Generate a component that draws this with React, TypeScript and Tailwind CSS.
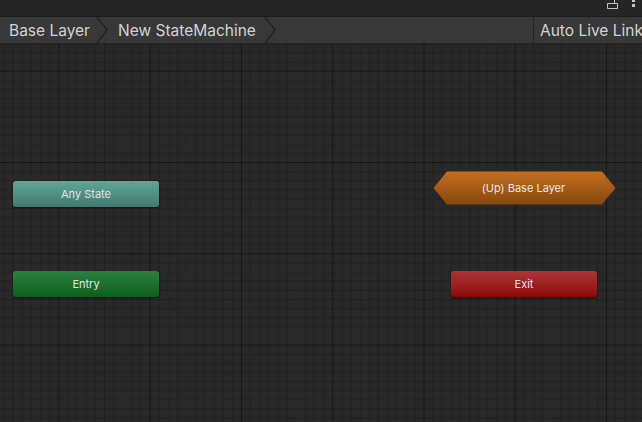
import React from 'react';

const MINOR = 9.13;
const MAJOR = 91.3;

function GridBackground() {
  const minors = Array.from({ length: 10 }, (_, i) => i * MINOR);
  return (
    <svg className="absolute inset-0 w-full h-full" xmlns="http://www.w3.org/2000/svg">
      <defs>
        <pattern id="grid" x="58.3" y="26.7" width={MAJOR} height={MAJOR} patternUnits="userSpaceOnUse">
          <rect width={MAJOR} height={MAJOR} fill="#292929" />
          {minors.map((p) => (
            <g key={p}>
              <line x1={p + 0.5} y1="0" x2={p + 0.5} y2={MAJOR} stroke="#212121" strokeWidth="1" />
              <line x1="0" y1={p + 0.5} x2={MAJOR} y2={p + 0.5} stroke="#212121" strokeWidth="1" />
            </g>
          ))}
          <line x1="0.5" y1="0" x2="0.5" y2={MAJOR} stroke="#171717" strokeWidth="1" />
          <line x1="0" y1="0.5" x2={MAJOR} y2="0.5" stroke="#171717" strokeWidth="1" />
        </pattern>
      </defs>
      <rect width="100%" height="100%" fill="url(#grid)" />
    </svg>
  );
}

function Chevron() {
  return (
    <svg width="14" height="26" viewBox="0 0 14 26" className="shrink-0">
      <path d="M1 0 L11 13 L1 26" fill="none" stroke="#222" strokeWidth="1.5" />
    </svg>
  );
}

function StateNode({ label, className }: { label: string; className: string }) {
  return (
    <div
      className={`absolute h-[26px] w-[146px] rounded-[3px] flex items-center justify-center text-[11px] text-[#e4e4e4] shadow-[0_1px_2px_rgba(0,0,0,0.6)] ${className}`}
    >
      {label}
    </div>
  );
}

export default function App() {
  return (
    <div className="w-[642px] h-[422px] bg-[#282828] flex flex-col overflow-hidden" style={{ fontFamily: 'Inter, "Noto Sans", sans-serif' }}>
      {/* title strip */}
      <div className="h-[17px] bg-[#262626] border-b border-[#1d1d1d] flex justify-end items-start gap-[14px] pr-[7px] shrink-0">
        <svg width="11" height="9" viewBox="0 0 11 9">
          <path d="M0.5 3.5 H10.5 V8.5 H0.5 Z M7.5 3.5 V0" fill="none" stroke="#c4c4c4" strokeWidth="1" />
        </svg>
        <svg width="3" height="10" viewBox="0 0 3 10">
          <rect x="0" y="0" width="3" height="2" fill="#c4c4c4" />
          <rect x="0" y="4" width="3" height="3" fill="#c4c4c4" />
        </svg>
      </div>

      {/* breadcrumb bar */}
      <div className="h-[27px] bg-[#383838] border-b border-[#232323] flex items-stretch shrink-0 text-[15.5px] text-[#d2d2d2]">
        <div className="flex items-center pl-[9px] pr-[6px] pt-[1px]">Base Layer</div>
        <Chevron />
        <div className="flex items-center pl-[8px] pr-[8px] pt-[1px]">New StateMachine</div>
        <Chevron />
        <div className="flex-1" />
        <div className="flex items-center border-l border-[#252525] pl-[6px] pt-[1px] whitespace-nowrap w-[109px] overflow-hidden">
          Auto Live Link
        </div>
      </div>

      {/* graph canvas */}
      <div className="relative flex-1">
        <GridBackground />

        <StateNode
          label="Any State"
          className="left-[13px] top-[137px] bg-gradient-to-b from-[#5ea898] to-[#43796e]"
        />
        <StateNode
          label="Entry"
          className="left-[13px] top-[227px] bg-gradient-to-b from-[#2b8040] to-[#0b5f1d]"
        />
        <StateNode
          label="Exit"
          className="left-[451px] top-[227px] bg-gradient-to-b from-[#ab3337] to-[#8e0606]"
        />

        <div className="absolute left-[433px] top-[127px] w-[183px] h-[34px]">
          <svg width="183" height="34" viewBox="0 0 183 34" className="absolute inset-0">
            <defs>
              <linearGradient id="orange" x1="0" y1="0" x2="0" y2="1">
                <stop offset="0" stopColor="#c46e1f" />
                <stop offset="1" stopColor="#85480f" />
              </linearGradient>
            </defs>
            <path d="M0.5 17 L14 0.5 H169 L182.5 17 L169 33.5 H14 Z" fill="url(#orange)" />
          </svg>
          <div className="relative h-full flex items-center justify-center text-[11px] text-[#e8e8e8] pr-[2px]">
            (Up) Base Layer
          </div>
        </div>
      </div>
    </div>
  );
}
